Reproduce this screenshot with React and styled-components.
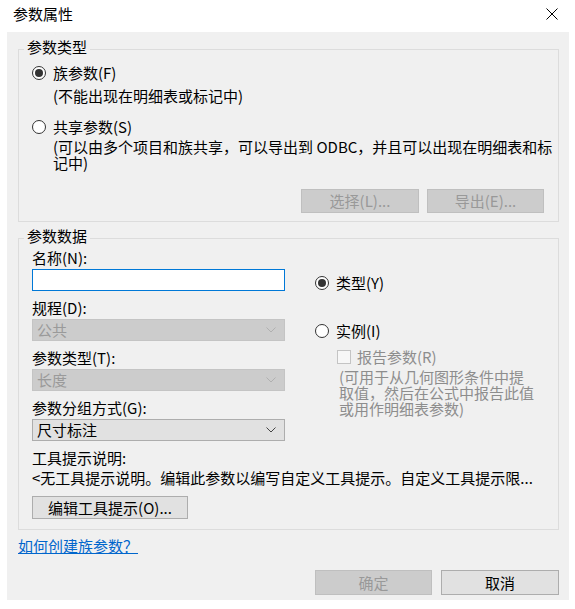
import React from 'react';
import styled, { createGlobalStyle } from 'styled-components';

const Global = createGlobalStyle`
  html, body { margin: 0; padding: 0; background: #ffffff; }
  body {
    font-family: "Noto Sans CJK SC", "Noto Sans", sans-serif;
    font-size: 15px;
    color: #000;
  }
  * { box-sizing: border-box; }
`;

const Window = styled.div`
  width: 575px;
  height: 609px;
  background: #fff;
  display: flex;
  flex-direction: column;
`;

const TitleBar = styled.div`
  height: 32px;
  flex: none;
  display: flex;
  align-items: center;
  justify-content: space-between;
  padding: 0 17px 4px 13px;
`;

const Title = styled.div`
  font-size: 15px;
  line-height: 16px;
`;

const Body = styled.div`
  flex: 1;
  margin: 0 6px 9px 7px;
  background: #f0f0f0;
  display: flex;
  flex-direction: column;
  padding: 7px 10px 5px 11px;
`;

const Group = styled.fieldset`
  margin: ${p => p.$mt || 0}px 0 0 0;
  border: 1px solid #dcdcdc;
  padding: ${p => p.$pt}px 14px ${p => p.$pb}px 13px;
  min-width: 0;
  display: flex;
  flex-direction: column;
`;

const Legend = styled.legend`
  margin-left: -8px;
  padding: 0 3px 4px;
  line-height: 16px;
  font-size: 15px;
`;

const Row = styled.label`
  display: flex;
  align-items: center;
  gap: ${p => p.$gap ?? 7}px;
  height: 16px;
  line-height: 16px;
  margin: ${p => p.$mt ?? 0}px 0 0 ${p => p.$ml ?? 0}px;
  color: ${p => (p.$disabled ? '#8d8d8d' : '#000')};
  white-space: nowrap;
`;

const Radio = styled.span`
  width: 14px;
  height: 14px;
  flex: none;
  border-radius: 50%;
  border: 1px solid #333;
  background: #fff;
  display: flex;
  align-items: center;
  justify-content: center;
  &::after {
    content: '';
    width: 8px;
    height: 8px;
    border-radius: 50%;
    background: ${p => (p.$checked ? '#333' : 'transparent')};
  }
`;

const Check = styled.span`
  width: 14px;
  height: 14px;
  flex: none;
  border: 1px solid #c4c4c4;
  background: #f7f7f7;
`;

const Note = styled.div`
  margin: ${p => p.$mt ?? 0}px 0 0 ${p => p.$ml ?? 21}px;
  line-height: 16px;
  white-space: nowrap;
  color: ${p => (p.$gray ? '#8d8d8d' : '#000')};
`;

const ButtonRow = styled.div`
  display: flex;
  justify-content: ${p => p.$justify || 'flex-end'};
  gap: ${p => p.$gap ?? 8}px;
  margin-top: ${p => p.$mt || 0}px;
`;

const Button = styled.div`
  width: ${p => p.$w}px;
  height: ${p => p.$h || 24}px;
  flex: none;
  display: flex;
  align-items: center;
  justify-content: center;
  font-size: 15px;
  line-height: 16px;
  background: ${p => (p.$disabled ? '#cccccc' : '#e1e1e1')};
  border: 1px solid ${p => (p.$disabled ? '#bfbfbf' : '#adadad')};
  color: ${p => (p.$disabled ? '#999999' : '#000')};
`;

const DataGrid = styled.div`
  display: grid;
  grid-template-columns: 253px 1fr;
  column-gap: 30px;
`;

const LeftCol = styled.div`
  display: flex;
  flex-direction: column;
  gap: 9px;
`;

const RightCol = styled.div`
  display: flex;
  flex-direction: column;
  padding-top: 25px;
`;

const Field = styled.div`
  display: flex;
  flex-direction: column;
  gap: 3px;
`;

const FieldLabel = styled.div`
  line-height: 16px;
  height: 16px;
  white-space: nowrap;
  margin-top: ${p => p.$mt || 0}px;
`;

const TextInput = styled.input`
  width: 253px;
  height: 22px;
  border: 1px solid #0078d7;
  background: #fff;
  outline: none;
  padding: 0 4px;
  font: inherit;
`;

const Select = styled.div`
  width: 253px;
  height: 22px;
  display: flex;
  align-items: center;
  justify-content: space-between;
  padding: 0 8px 0 4px;
  line-height: 16px;
  background: ${p => (p.$disabled ? '#cccccc' : '#e1e1e1')};
  border: 1px solid ${p => (p.$disabled ? '#c4c4c4' : '#adadad')};
  color: ${p => (p.$disabled ? '#9a9a9a' : '#000')};
`;

const Chevron = ({ color }) => (
  <svg width="10" height="6" viewBox="0 0 10 6">
    <polyline points="0.5,0.5 5,5 9.5,0.5" fill="none" stroke={color} strokeWidth="1" />
  </svg>
);

const CloseIcon = () => (
  <svg width="12" height="12" viewBox="0 0 12 12">
    <line x1="0.5" y1="0.5" x2="11.5" y2="11.5" stroke="#000" strokeWidth="1" />
    <line x1="11.5" y1="0.5" x2="0.5" y2="11.5" stroke="#000" strokeWidth="1" />
  </svg>
);

const Link = styled.a`
  align-self: flex-start;
  margin-top: 8px;
  line-height: 16px;
  color: #0066cc;
  text-decoration: underline;
  cursor: pointer;
`;

export default function App() {
  return (
    <>
      <Global />
      <Window>
        <TitleBar>
          <Title>参数属性</Title>
          <CloseIcon />
        </TitleBar>
        <Body>
          <Group $pt={6} $pb={8}>
            <Legend>参数类型</Legend>
            <Row>
              <Radio $checked />
              族参数(F)
            </Row>
            <Note $mt={7}>(不能出现在明细表或标记中)</Note>
            <Row $mt={15}>
              <Radio />
              共享参数(S)
            </Row>
            <Note $mt={4}>
              (可以由多个项目和族共享，可以导出到 ODBC，并且可以出现在明细表和标
              <br />
              记中)
            </Note>
            <ButtonRow $mt={18} $gap={8}>
              <Button $w={118} $disabled>选择(L)...</Button>
              <Button $w={117} $disabled>导出(E)...</Button>
            </ButtonRow>
          </Group>

          <Group $mt={6} $pt={2} $pb={10}>
            <Legend>参数数据</Legend>
            <DataGrid>
              <LeftCol>
                <Field>
                  <FieldLabel>名称(N):</FieldLabel>
                  <TextInput defaultValue="" />
                </Field>
                <Field>
                  <FieldLabel>规程(D):</FieldLabel>
                  <Select $disabled>
                    公共
                    <Chevron color="#b0b0b0" />
                  </Select>
                </Field>
                <Field>
                  <FieldLabel>参数类型(T):</FieldLabel>
                  <Select $disabled>
                    长度
                    <Chevron color="#b0b0b0" />
                  </Select>
                </Field>
                <Field>
                  <FieldLabel>参数分组方式(G):</FieldLabel>
                  <Select>
                    尺寸标注
                    <Chevron color="#444" />
                  </Select>
                </Field>
              </LeftCol>
              <RightCol>
                <Row>
                  <Radio $checked />
                  类型(Y)
                </Row>
                <Row $mt={32}>
                  <Radio />
                  实例(I)
                </Row>
                <Row $mt={10} $ml={22} $gap={6} $disabled>
                  <Check />
                  报告参数(R)
                </Row>
                <Note $mt={4} $ml={24} $gray>
                  (可用于从几何图形条件中提
                  <br />
                  取值，然后在公式中报告此值
                  <br />
                  或用作明细表参数)
                </Note>
              </RightCol>
            </DataGrid>
            <FieldLabel $mt={9}>工具提示说明:</FieldLabel>
            <Note $mt={4} $ml={0}>
              &lt;无工具提示说明。编辑此参数以编写自定义工具提示。自定义工具提示限...
            </Note>
            <ButtonRow $mt={10} $justify="flex-start">
              <Button $w={156} $h={23}>编辑工具提示(O)...</Button>
            </ButtonRow>
          </Group>

          <Link>如何创建族参数？</Link>

          <ButtonRow $mt={16} $gap={9}>
            <Button $w={117} $h={25} $disabled>确定</Button>
            <Button $w={118} $h={25}>取消</Button>
          </ButtonRow>
        </Body>
      </Window>
    </>
  );
}
